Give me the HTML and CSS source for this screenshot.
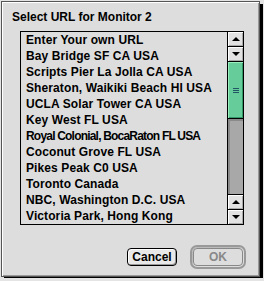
FILE: index.html
```html
<!DOCTYPE html>
<html lang="en">
<head>
  <meta charset="UTF-8" />
  <title>Select URL</title>
  <link rel="stylesheet" href="styles.css">
</head>
<body>
  <div class="dialog">
    <div class="title">Select URL for Monitor 2</div>

    <div class="listbox">
      <ul class="items">
        <li>Enter Your own URL</li>
        <li>Bay Bridge SF CA USA</li>
        <li>Scripts Pier La Jolla CA USA</li>
        <li>Sheraton, Waikiki Beach HI USA</li>
        <li>UCLA Solar Tower CA USA</li>
        <li>Key West FL USA</li>
        <li class="narrow">Royal Colonial, BocaRaton FL USA</li>
        <li>Coconut Grove FL USA</li>
        <li>Pikes Peak C0 USA</li>
        <li>Toronto Canada</li>
        <li>NBC, Washington D.C. USA</li>
        <li>Victoria Park, Hong Kong</li>
      </ul>
      <div class="scrollbar">
        <div class="arrow up"><span class="tri-up"></span></div>
        <div class="arrow down"><span class="tri-down"></span></div>
        <div class="thumb"><span class="grip"></span></div>
        <div class="track"></div>
        <div class="arrow up top-line"><span class="tri-up"></span></div>
        <div class="arrow down top-line"><span class="tri-down"></span></div>
      </div>
    </div>

    <div class="buttons">
      <button class="btn">Cancel</button>
      <div class="default-ring">
        <button class="btn disabled">OK</button>
      </div>
    </div>
  </div>
</body>
</html>
```

FILE: styles.css
```css
body {
  margin: 0;
  background-color: #e4e4e4;
  font-family: "Liberation Sans", Arial, sans-serif;
  font-weight: bold;
  font-size: 12px;
}
.dialog {
  box-sizing: border-box;
  width: 259px;
  height: 276px;
  margin: 1px;
  border: 1px solid #555;
  background-color: #dddddd;
  box-shadow: inset 1px 1px #fff, inset -1px -1px #999, 3px 3px 0 #000;
  padding: 7px 0 0 10px;
}
.title {
  line-height: 16px;
  letter-spacing: 0;
}
.listbox {
  display: flex;
  box-sizing: border-box;
  width: 224px;
  height: 194px;
  margin: 6px 0 0 8px;
  border: 1px solid #000;
}
.items {
  flex: 1;
  list-style: none;
  margin: 0;
  padding: 0 0 0 5px;
}
.items li {
  line-height: 16px;
  white-space: nowrap;
  letter-spacing: 0.1px;
}
.items li.narrow {
  letter-spacing: -0.8px;
}
.scrollbar {
  display: flex;
  flex-direction: column;
  width: 15px;
  border-left: 1px solid #000;
}
.arrow {
  display: flex;
  align-items: center;
  justify-content: center;
  height: 14px;
  background-color: #e2e2e2;
  box-shadow: inset 1px 1px #fff, inset -1px -1px #aaa;
}
.arrow.up {
  border-bottom: 1px solid #000;
}
.arrow.down {
  border-bottom: 1px solid #000;
}
.arrow.top-line {
  border-bottom: none;
  border-top: 1px solid #000;
}
.arrow.down.top-line {
  border-top: none;
}
.arrow.up.top-line {
  border-bottom: 1px solid #000;
}
.tri-up {
  width: 0;
  height: 0;
  border-left: 4px solid transparent;
  border-right: 4px solid transparent;
  border-bottom: 4px solid #000;
}
.tri-down {
  width: 0;
  height: 0;
  border-left: 4px solid transparent;
  border-right: 4px solid transparent;
  border-top: 4px solid #000;
}
.thumb {
  display: flex;
  align-items: center;
  justify-content: center;
  height: 56px;
  border-bottom: 1px solid #000;
  background-color: #66cc99;
  box-shadow: inset 1px 1px #99eebb, inset -1px -1px #339966;
}
.grip {
  width: 6px;
  height: 5px;
  background: repeating-linear-gradient(#225566 0 1px, transparent 1px 2px);
}
.track {
  flex: 1;
  background-color: #a8a8a8;
  box-shadow: inset 2px 2px #8a8a8a;
}
.buttons {
  display: flex;
  align-items: center;
  justify-content: flex-end;
  width: 234px;
  margin-top: 20px;
  gap: 13px;
}
.btn {
  box-sizing: border-box;
  width: 50px;
  height: 18px;
  padding: 0;
  border: 1px solid #000;
  border-radius: 4px;
  background-color: #e8e8e8;
  box-shadow: inset 1px 1px #fff, inset -1px -1px #999;
  font-family: inherit;
  font-weight: bold;
  font-size: 12px;
  color: #000;
}
.default-ring {
  display: flex;
  padding: 1px;
  border: 2px solid #999;
  border-radius: 7px;
  box-shadow: inset 1px 1px #bbb;
}
.btn.disabled {
  border-color: #888;
  color: #888;
  box-shadow: none;
  background-color: #dddddd;
}
```
